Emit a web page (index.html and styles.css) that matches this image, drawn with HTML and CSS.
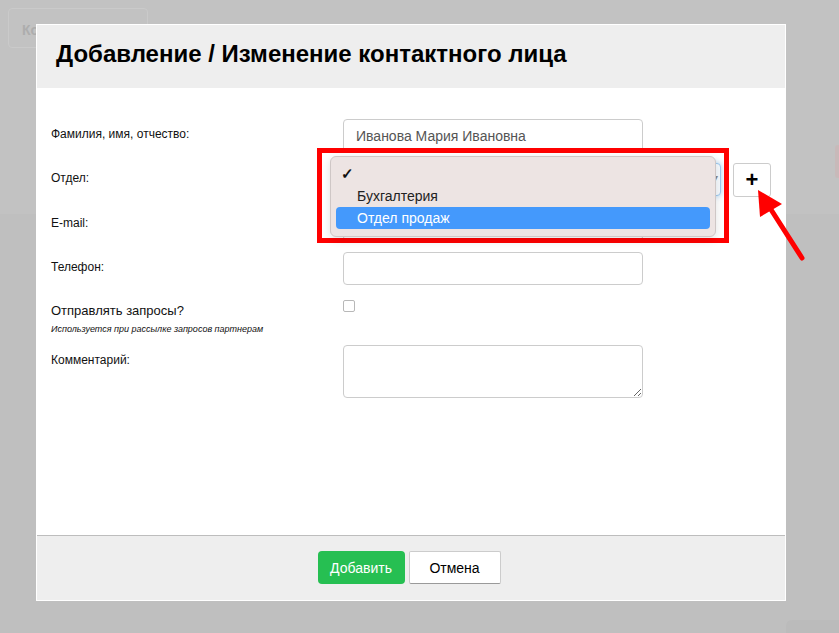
FILE: index.html
```html
<!DOCTYPE html>
<html lang="ru">
<head>
  <meta charset="UTF-8">
  <meta name="viewport" content="width=device-width, initial-scale=1.0">
  <title>Контактное лицо</title>
  <link rel="stylesheet" href="styles.css">
</head>
<body>
  <div class="page-top">
    <div class="ghost-btn">Контакты</div>
  </div>
  <div class="side-tab"></div>
  <div class="corner-chip"></div>

  <div class="modal">
    <header class="modal-header">
      <h1>Добавление / Изменение контактного лица</h1>
    </header>

    <form class="modal-body">
      <div class="row">
        <label class="label">Фамилия, имя, отчество:</label>
        <input class="field" type="text" value="Иванова Мария Ивановна">
      </div>

      <div class="row">
        <label class="label">Отдел:</label>
        <div class="select-line">
          <div class="select-wrap">
            <div class="select-box"><span class="caret">&#9662;</span></div>

            <div class="callout"></div>
            <ul class="dropdown">
              <li class="option checked"><span class="tick">&#10003;</span></li>
              <li class="option">Бухгалтерия</li>
              <li class="option active">Отдел продаж</li>
            </ul>
          </div>
          <button type="button" class="add-btn">+</button>
        </div>
      </div>

      <div class="row">
        <label class="label">E-mail:</label>
        <input class="field" type="text">
      </div>

      <div class="row">
        <label class="label">Телефон:</label>
        <input class="field" type="text">
      </div>

      <div class="row row-check">
        <label class="label">
          Отправлять запросы?
          <span class="hint">Используется при рассылке запросов партнерам</span>
        </label>
        <div><input class="check" type="checkbox"></div>
      </div>

      <div class="row">
        <label class="label">Комментарий:</label>
        <textarea class="field area"></textarea>
      </div>
    </form>

    <footer class="modal-footer">
      <button type="button" class="btn btn-green">Добавить</button>
      <button type="button" class="btn btn-plain">Отмена</button>
    </footer>
  </div>

  <svg class="arrow" width="60" height="80" viewBox="0 0 60 80">
    <line x1="20" y1="22" x2="52" y2="72" stroke="#ff0000" stroke-width="5" stroke-linecap="round"/>
    <polygon points="8,4 10,31 32,18" fill="#ff0000"/>
  </svg>
</body>
</html>
```

FILE: styles.css
```css
* {
  margin: 0;
  padding: 0;
  box-sizing: border-box;
}

body {
  font-family: "Liberation Sans", Arial, sans-serif;
  background: #bfbfbf;
  height: 633px;
  overflow: hidden;
  position: relative;
}

.page-top {
  height: 214px;
  background: #c2c2c2;
  padding: 8px;
}

.ghost-btn {
  width: 140px;
  height: 40px;
  border: 1px solid #cacaca;
  border-radius: 4px;
  padding: 13px 0 0 13px;
  font-size: 14px;
  font-weight: bold;
  color: #adadad;
}

.side-tab {
  position: absolute;
  right: 0;
  top: 145px;
  width: 4px;
  height: 33px;
  background: #c8b9b9;
  border-radius: 3px 0 0 3px;
}

.corner-chip {
  position: absolute;
  left: 786px;
  top: 620px;
  width: 60px;
  height: 20px;
  background: #bbbbbb;
  border-radius: 6px 0 0 0;
}

.modal {
  position: absolute;
  left: 36px;
  top: 24px;
  width: 750px;
  height: 577px;
  border: 1px solid #ffffff;
  background: #ffffff;
  display: flex;
  flex-direction: column;
}

.modal-header {
  height: 63px;
  background: #eeeeee;
  padding-left: 19px;
}

.modal-header h1 {
  font-size: 24px;
  line-height: 58px;
  font-weight: bold;
  color: #000000;
}

.modal-body {
  height: 447px;
  padding: 31px 0 0 14px;
}

.row {
  display: grid;
  grid-template-columns: 292px 1fr;
  margin-bottom: 11px;
}

.label {
  display: block;
  font-size: 12px;
  line-height: 13px;
  padding-top: 9px;
  color: #111111;
}

.field {
  width: 300px;
  height: 33px;
  border: 1px solid #cccccc;
  border-radius: 4px;
  padding: 0 12px;
  font-family: "Liberation Sans", Arial, sans-serif;
  font-size: 14px;
  color: #555555;
  background: #ffffff;
}

.area {
  height: 53px;
  display: block;
}

.select-line {
  display: flex;
  gap: 12px;
}

.select-wrap {
  position: relative;
  width: 378px;
  height: 33px;
}

.select-box {
  height: 33px;
  border: 1px solid #9cc8ee;
  border-radius: 4px;
  background: #f6fafe;
  box-shadow: 0 0 6px rgba(102, 175, 233, 0.6);
  position: relative;
}

.caret {
  position: absolute;
  right: 2px;
  top: 8px;
  font-size: 10px;
  color: #888888;
}

.add-btn {
  width: 38px;
  height: 34px;
  border: 1px solid #cccccc;
  border-radius: 3px;
  background: #ffffff;
  font-family: "Liberation Sans", Arial, sans-serif;
  font-size: 22px;
  font-weight: bold;
  line-height: 30px;
  color: #000000;
}

.callout {
  position: absolute;
  left: -26px;
  top: -15px;
  width: 412px;
  height: 95px;
  border: 5px solid #ff0000;
}

.dropdown {
  position: absolute;
  left: -13px;
  top: -7px;
  width: 386px;
  list-style: none;
  background: #ede4e3;
  border: 1px solid #cfc7c6;
  border-radius: 6px;
  box-shadow: 0 3px 10px rgba(0, 0, 0, 0.12);
  padding: 6px 5px 7px;
}

.option {
  position: relative;
  height: 22px;
  line-height: 22px;
  padding-left: 21px;
  font-size: 14px;
  color: #222222;
  border-radius: 4px;
}

.option.active {
  background: #4499fc;
  color: #ffffff;
}

.tick {
  position: absolute;
  left: 5px;
  top: 0;
  font-size: 15px;
  font-weight: bold;
  color: #111111;
}

.row-check .label {
  font-size: 13px;
  line-height: 16px;
  padding-top: 7px;
  height: 38px;
}

.hint {
  display: block;
  margin-top: 5px;
  font-size: 9px;
  line-height: 10px;
  font-style: italic;
  color: #111111;
}

.check {
  appearance: none;
  display: block;
  width: 12px;
  height: 12px;
  margin-top: 4px;
  border: 1px solid #b8b8b8;
  border-radius: 2px;
  background: #ffffff;
}

.modal-footer {
  height: 65px;
  border-top: 1px solid #bdbdbd;
  background: #eeeeee;
  padding: 15px 4px 0 0;
  display: flex;
  justify-content: center;
  gap: 4px;
}

.btn {
  height: 33px;
  font-family: "Liberation Sans", Arial, sans-serif;
  font-size: 14px;
  cursor: pointer;
}

.btn-green {
  width: 87px;
  border: none;
  border-radius: 4px;
  background: #26bf52;
  color: #ffffff;
}

.btn-plain {
  width: 92px;
  border: 1px solid #cccccc;
  border-bottom-color: #9a9a9a;
  border-radius: 2px;
  background: #ffffff;
  color: #000000;
}

.arrow {
  position: absolute;
  left: 750px;
  top: 186px;
}
```
